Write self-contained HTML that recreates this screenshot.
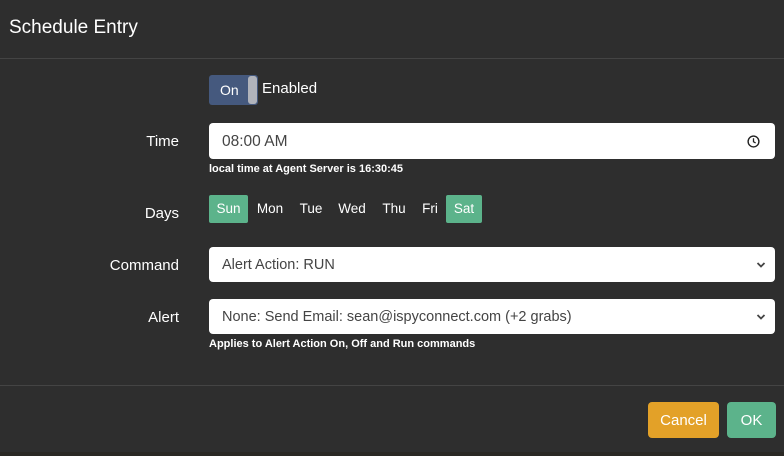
<!DOCTYPE html>
<html><head><style>
body{margin:0;width:784px;height:456px;background:#2e2e2e;font-family:"Liberation Sans",sans-serif;color:#fff;overflow:hidden;position:relative}
.a{position:absolute}
.lbl{position:absolute;right:605px;font-size:15px;text-align:right}
.inp{position:absolute;left:209px;width:566px;background:#fff;border-radius:4px;color:#444;font-size:14.5px;box-sizing:border-box;padding-left:13px}
.small{position:absolute;left:209px;font-size:11px;font-weight:bold}
.day{position:absolute;top:195px;height:28px;line-height:28px;font-size:13.5px;text-align:center}
.chev{position:absolute;right:9px;top:50%;margin-top:-4px}
</style></head><body>
<div class="a" style="left:9px;top:17px;font-size:19px">Schedule Entry</div>
<div class="a" style="left:0;top:58px;width:784px;height:1px;background:#444"></div>
<div class="a" style="left:209px;top:75px;width:49px;height:30px;background:#45597e;border-radius:3px"></div>
<div class="a" style="left:248px;top:76px;width:9px;height:28px;background:#b0b3bb;border-radius:3px"></div>
<div class="a" style="left:220px;top:82px;font-size:14px">On</div>
<div class="a" style="left:262px;top:80px;font-size:15px">Enabled</div>
<div class="lbl" style="top:133px">Time</div>
<div class="inp" style="top:123px;height:36px;line-height:38px;font-size:15.5px">08:00 AM
<svg class="a" style="right:15px;top:12px" width="13" height="13" viewBox="0 0 14 14"><circle cx="7" cy="7" r="5.8" fill="none" stroke="#222" stroke-width="1.5"/><path d="M7 3.5V7.3L9.3 8.6" fill="none" stroke="#222" stroke-width="1.4"/></svg></div>
<div class="small" style="top:163px">local time at Agent Server is 16:30:45</div>
<div class="lbl" style="top:205px">Days</div>
<div class="day" style="left:209px;width:39px;background:#5cb38b;border-radius:2px">Sun</div>
<div class="day" style="left:252px;width:36px">Mon</div>
<div class="day" style="left:296px;width:30px">Tue</div>
<div class="day" style="left:334px;width:36px">Wed</div>
<div class="day" style="left:378px;width:32px">Thu</div>
<div class="day" style="left:418px;width:24px">Fri</div>
<div class="day" style="left:446px;width:36px;background:#5cb38b;border-radius:2px">Sat</div>
<div class="lbl" style="top:257px">Command</div>
<div class="inp" style="top:247px;height:35px;line-height:37px">Alert Action: RUN
<svg class="chev" width="10" height="8" viewBox="0 0 10 8"><path d="M1.5 2L5 5.5 8.5 2" fill="none" stroke="#444" stroke-width="1.8"/></svg></div>
<div class="lbl" style="top:309px">Alert</div>
<div class="inp" style="top:299px;height:35px;line-height:37px">None: Send Email: sean@ispyconnect.com (+2 grabs)
<svg class="chev" width="10" height="8" viewBox="0 0 10 8"><path d="M1.5 2L5 5.5 8.5 2" fill="none" stroke="#444" stroke-width="1.8"/></svg></div>
<div class="small" style="top:338px">Applies to Alert Action On, Off and Run commands</div>
<div class="a" style="left:0;top:385px;width:784px;height:1px;background:#444"></div>
<div class="a" style="left:648px;top:402px;width:71px;height:36px;background:#e3a128;border-radius:4px;text-align:center;line-height:37px;font-size:15px">Cancel</div>
<div class="a" style="left:727px;top:402px;width:49px;height:36px;background:#5cb38b;border-radius:4px;text-align:center;line-height:37px;font-size:15px">OK</div>
<div class="a" style="left:0;top:452px;width:784px;height:4px;background:#2a2824"></div>
</body></html>
